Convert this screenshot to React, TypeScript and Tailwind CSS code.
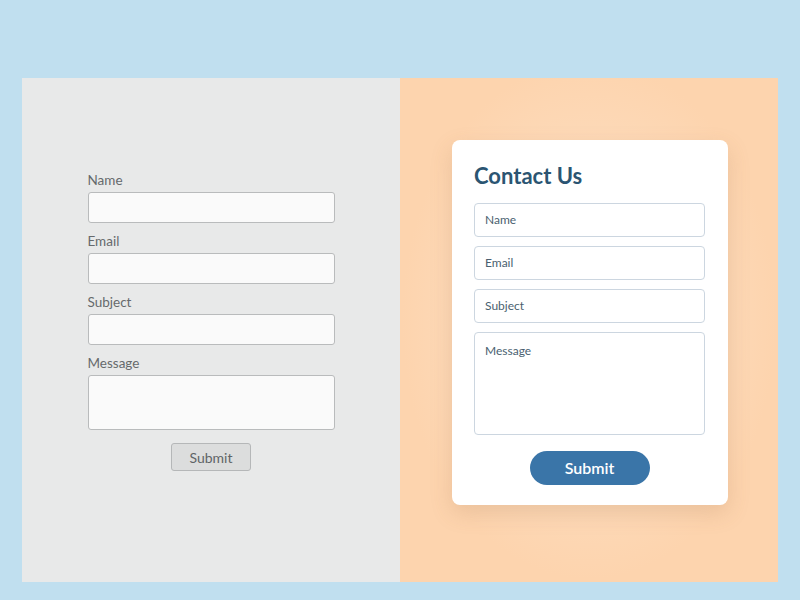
const leftFields = [
    { label: 'Name', h: 'h-[31px]' },
    { label: 'Email', h: 'h-[31px]' },
    { label: 'Subject', h: 'h-[31px]' },
    { label: 'Message', h: 'h-[55px]' },
];

const rightFields = ['Name', 'Email', 'Subject'];

const App = () => {
    return (
        <div className="w-[800px] h-[600px] bg-[#c0dfef] pt-[78px] pl-[22px] font-['Lato','Noto_Sans',sans-serif]">
            <div className="w-[756px] h-[504px] flex flex-row">
                {/* plain form */}
                <div className="w-[378px] h-full bg-[#e8e9e9] flex flex-col items-center justify-center pb-[18px]">
                    <div className="w-[247px] flex flex-col gap-[9px]">
                        {leftFields.map((f) => (
                            <div key={f.label}>
                                <p className="text-[13.5px] leading-[18px] text-[#666a6c] mb-[3px]">{f.label}</p>
                                <div className={`w-full ${f.h} bg-[#fafafa] border border-[#b9bbbc] rounded-[3px]`}></div>
                            </div>
                        ))}
                        <div className="flex justify-center mt-[4px]">
                            <button className="w-[80px] h-[28px] bg-[#dcdddd] border border-[#b5b7b8] rounded-[3px] text-[14px] text-[#5f6466]">
                                Submit
                            </button>
                        </div>
                    </div>
                </div>

                {/* styled form */}
                <div className="w-[378px] h-full bg-[#fdd5b0] bg-[radial-gradient(ellipse_at_50%_48%,#fde5cf_0%,#fddcbd_35%,#fdd4ae_70%)] flex items-center justify-center pb-[16px] pl-[2px]">
                    <div className="w-[276px] bg-white rounded-[8px] shadow-[0_8px_22px_rgba(150,100,60,0.18)] pt-[22px] pb-[20px] pl-[22px] pr-[23px]">
                        <h1 className="text-[22px] leading-[28px] font-bold text-[#2b5572] mb-[13px]">Contact Us</h1>
                        <div className="flex flex-col gap-[9px]">
                            {rightFields.map((f) => (
                                <div key={f} className="h-[34px] border border-[#ccd6e0] rounded-[4px] flex items-center pl-[10px] text-[12px] text-[#4a5f70]">
                                    {f}
                                </div>
                            ))}
                            <div className="h-[103px] border border-[#ccd6e0] rounded-[4px] pl-[10px] pt-[10px] text-[12px] leading-[16px] text-[#4a5f70]">
                                Message
                            </div>
                        </div>
                        <div className="flex justify-center mt-[16px]">
                            <button className="w-[120px] h-[34px] rounded-full bg-[#3a75a8] text-white text-[16px] font-semibold">
                                Submit
                            </button>
                        </div>
                    </div>
                </div>
            </div>
        </div>
    );
};

export default App;
